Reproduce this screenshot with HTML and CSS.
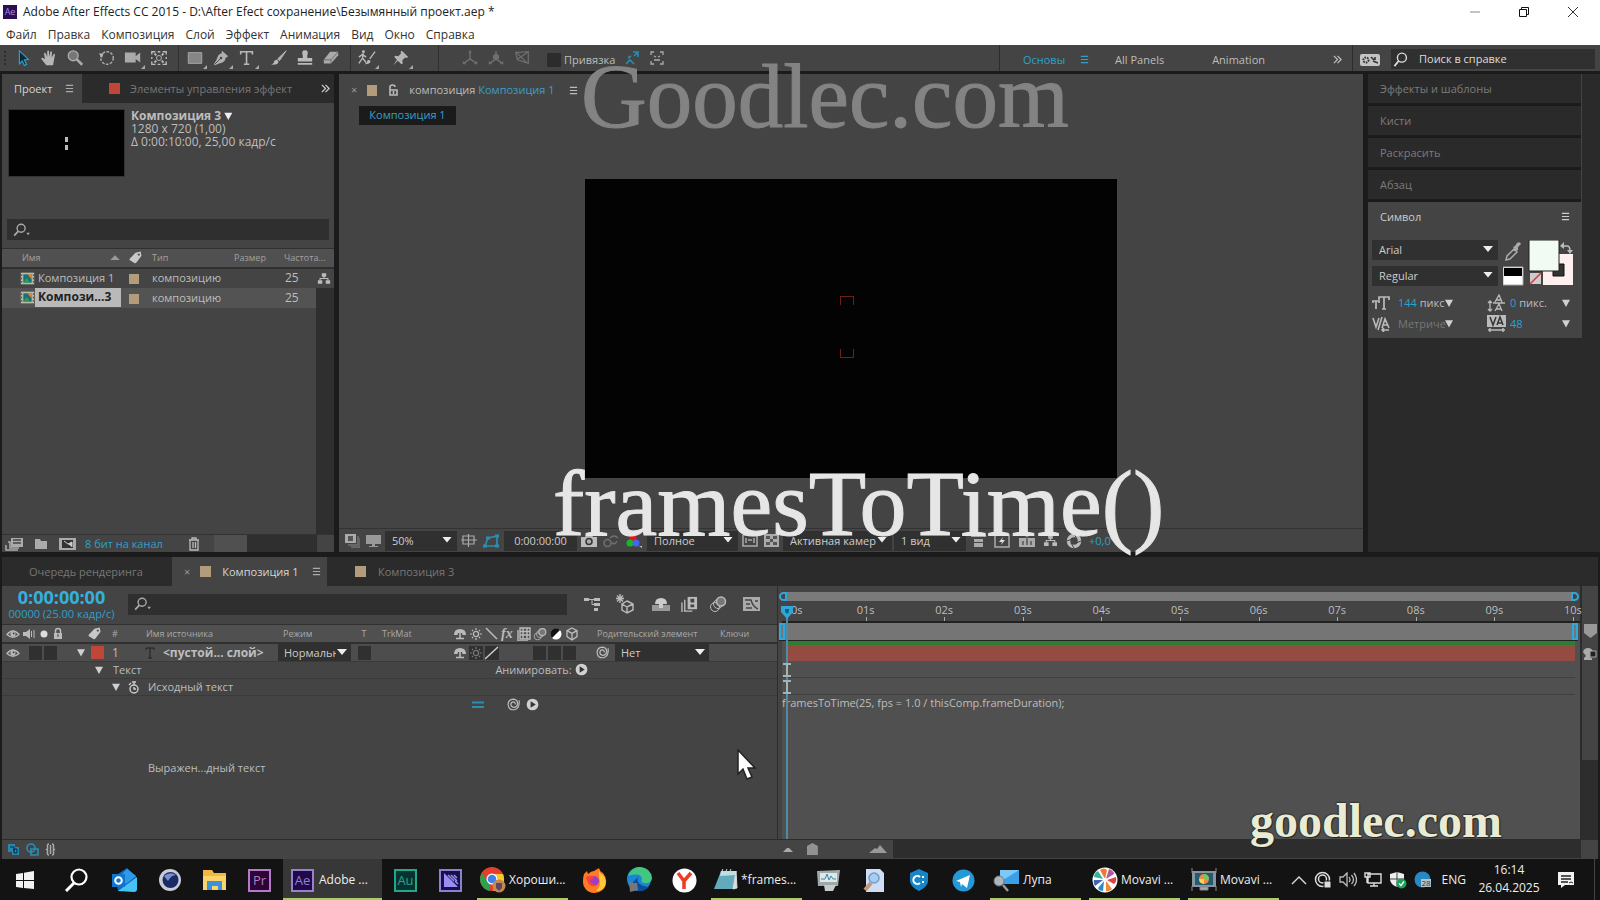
FILE: index.html
```html
<!DOCTYPE html>
<html lang="ru">
<head>
<meta charset="utf-8">
<title>Adobe After Effects CC 2015</title>
<link rel="stylesheet" href="styles.css">
</head>
<body>
<svg class="defs" aria-hidden="true">
  <defs>
    <symbol id="menu" viewBox="0 0 10 10"><path d="M1 1.5h8M1 5h8M1 8.5h8" stroke="currentColor" stroke-width="1.2"/></symbol>
    <symbol id="more" viewBox="0 0 10 10"><path d="M1 1l4 4-4 4M5 1l4 4-4 4" stroke="currentColor" stroke-width="1.4" fill="none"/></symbol>
    <symbol id="find" viewBox="0 0 20 16"><circle cx="9" cy="6" r="4.6" fill="none" stroke="currentColor" stroke-width="1.6"/><path d="M5.6 9.5L1 14.5" stroke="currentColor" stroke-width="2"/><path d="M15 11h4l-2 3z" fill="currentColor"/></symbol>
    <symbol id="glass" viewBox="0 0 16 16"><circle cx="9.5" cy="6" r="4.8" fill="none" stroke="currentColor" stroke-width="1.5"/><path d="M6 9.6L1.5 15" stroke="currentColor" stroke-width="2"/></symbol>
    <symbol id="tag" viewBox="0 0 14 14"><path fill-rule="evenodd" fill="currentColor" d="M1 8L7 2l5.500-1.500L13.500 5 8 12.500q-1.500 1.500-3 0L1 10q-1-1 0-2zM10.500 2.600a1.200 1.200 0 1 0 .1 0z"/></symbol>
    <symbol id="eye" viewBox="0 0 14 10"><path d="M1 5.500Q7-1.500 13 5.500Q7 11 1 5.500z" fill="none" stroke="currentColor" stroke-width="1.300"/><circle cx="7" cy="5" r="2.600" fill="currentColor"/><circle cx="7.600" cy="4.400" r=".9" fill="#333"/></symbol>
    <symbol id="shy" viewBox="0 0 14 14"><path d="M1 8Q1 2 7 2t6 6H9.500L9 6H5L4.500 8z" fill="currentColor"/><path d="M7 6v6M3 11.500h8" stroke="currentColor" stroke-width="1.600"/></symbol>
    <symbol id="sun" viewBox="0 0 14 14"><circle cx="7" cy="7" r="2.600" fill="none" stroke="currentColor" stroke-width="1.300"/><path d="M7 1v2M7 11v2M1 7h2M11 7h2M3 3l1 1M10 10l1 1M11 3l-1 1M3 11l1-1" stroke="currentColor" stroke-width="1.200"/></symbol>
    <symbol id="cube" viewBox="0 0 14 14"><path d="M7 1l5 2.600v6L7 13 2 9.600v-6zM2 3.600l5 2.800 5-2.800M7 6.400V13" fill="none" stroke="currentColor" stroke-width="1.300"/></symbol>
    <symbol id="orbs" viewBox="0 0 18 18"><circle cx="6" cy="12" r="4.500" fill="none" stroke="currentColor"/><circle cx="9" cy="9" r="4.500" fill="none" stroke="currentColor"/><circle cx="12" cy="6.500" r="4.500" fill="#777" stroke="currentColor" stroke-width="1.500"/></symbol>
    <symbol id="film" viewBox="0 0 18 18"><path d="M7 1h10v13H7z" fill="currentColor"/><path d="M10 3h4v4h-4zM10 9h4v3h-4z" fill="#444"/><path d="M4 4v12M1 7v10M3 16h9" stroke="currentColor" stroke-width="1.500"/></symbol>
    <symbol id="grid" viewBox="0 0 14 14"><path d="M3 1h10v11H3zM3 4.500h10M3 8h10M6 1v11M10 1v11M1 3v11h10" fill="none" stroke="currentColor" stroke-width="1.400"/></symbol>
    <symbol id="swirl" viewBox="0 0 14 14"><path d="M13 2.500Q14 11 8.500 12.500 2 13.500 1.200 7.500 1 1.500 7 1.300q4.500.4 4.400 5Q10.800 10 7.300 10 4 9.600 4.200 6.600 4.600 4 7.200 4.200q2 .4 1.500 2.600" fill="none" stroke="currentColor" stroke-width="1.300"/></symbol>
    <symbol id="play" viewBox="0 0 14 14"><circle cx="7" cy="7" r="6.300" fill="#d0d0d0"/><path d="M5 3.500L10.500 7 5 10.500z" fill="#333"/></symbol>
    <symbol id="flow" viewBox="0 0 16 14"><path d="M5.500 1h5v4h-5zM1 9h5v4H1zM10 9h5v4h-5z" fill="currentColor"/><path d="M8 4v3M3.500 9V7h9v2" fill="none" stroke="currentColor" stroke-width="1.300"/></symbol>
    <symbol id="comp" viewBox="0 0 18 14"><path d="M1 0h16v14H1z" fill="#b9b9ad"/><path d="M4 2h10v10H4z" fill="#187078"/><path d="M9 2h5v6z" fill="#e88a28"/><path d="M4 12l4-6 4 6z" fill="#3a9b45"/><path d="M2 2v11M16 2v11" stroke="#333" stroke-dasharray="2 2"/></symbol>
    <symbol id="beam" viewBox="0 0 8 14"><path d="M0 1h8M0 13h8M4 1v12" fill="none" stroke="#a3b4b8" stroke-width="2"/></symbol>
  </defs>
</svg>

<header class="titlebar">
  <span class="logo">Ae</span>
  <span class="title">Adobe After Effects CC 2015 - D:\After Efect сохранение\Безымянный проект.aep *</span>
  <button class="win" aria-label="Свернуть"><svg width="12" height="12"><path d="M1 6h10" stroke="#888"/></svg></button>
  <button class="win" aria-label="Восстановить"><svg width="12" height="12" fill="none" stroke="#111"><path d="M1.500 3.500h7v7h-7zM3.500 3V1.500h7v7H9"/></svg></button>
  <button class="win" aria-label="Закрыть"><svg width="12" height="12"><path d="M1 1l10 10M11 1L1 11" stroke="#333"/></svg></button>
</header>
<nav class="menubar">
  <button>Файл</button><button>Правка</button><button>Композиция</button><button>Слой</button><button>Эффект</button><button>Анимация</button><button>Вид</button><button>Окно</button><button>Справка</button>
</nav>

<div class="toolbar">
  <span class="grip"></span>
  <div class="tools">
    <button aria-label="Выделение"><svg viewBox="0 0 20 20"><path d="M6 2l10 9.500-4.500.6 2.500 5-2.500 1.200-2.300-5L6 16.500z" fill="#0d2733" stroke="#2a9fc9" stroke-width="1.300"/></svg></button>
    <button aria-label="Рука"><svg viewBox="0 0 20 20"><path d="M7 18l-5.500-7q0-2 2-1l2 1.500L4.500 5q.8-1.500 2 0L8 9V2.500q1-1.500 2 0V9l1.500-6q1.200-1 1.800.3L13 9.500l2.200-4q1.500-.6 1.400 1L14.500 18z" fill="#b5b5b5"/></svg></button>
    <button aria-label="Масштаб"><svg viewBox="0 0 20 20"><circle cx="8" cy="7.500" r="5.500" fill="#777" stroke="#aaa" stroke-width="1.500"/><path d="M12 11.500l6 6" stroke="#aaa" stroke-width="3"/></svg></button>
  </div>
  <div class="tools">
    <button aria-label="Поворот"><svg viewBox="0 0 20 20"><circle cx="10" cy="10" r="7" fill="none" stroke="#aaa" stroke-width="1.600" stroke-dasharray="3 1.500"/><path d="M1 5l5 0-1.500 5z" fill="#bbb"/></svg></button>
    <button class="sub" aria-label="Камера"><svg viewBox="0 0 20 20"><path d="M1 4h12v11H1zM13 8l5-4v11l-5-4z" fill="#aaa"/></svg></button>
    <button aria-label="Центр"><svg viewBox="0 0 20 20"><path d="M2 6V3h4M14 3h4v3M18 14v3h-4M6 17H2v-3M8.500 3h3M8.500 17h3M2 9v2M18 9v2" fill="none" stroke="#bbb" stroke-width="1.500"/><circle cx="10" cy="10" r="2.800" fill="none" stroke="#bbb"/><path d="M5 5l2 2M15 5l-2 2M5 15l2-2M15 15l-2-2" stroke="#bbb" stroke-width="2"/></svg></button>
  </div>
  <i class="rule"></i>
  <div class="tools">
    <button class="sub" aria-label="Прямоугольник"><svg viewBox="0 0 20 20"><path d="M2.500 4h15v12h-15z" fill="#868686" stroke="#aaa"/></svg></button>
    <button class="sub" aria-label="Перо"><svg viewBox="0 0 20 20"><path d="M11 2l7 6-3 2q0 5-7 6l-5 2-1-1 3-5Q7 5 10.500 5z" fill="#b0b0b0"/><path d="M3 17l6-6" stroke="#444"/><circle cx="10" cy="10" r="1.400" fill="#444"/></svg></button>
    <button class="sub" aria-label="Текст"><svg viewBox="0 0 20 20"><path d="M3 6V3h13v3M9.500 3v14M6.500 17h6" fill="none" stroke="#b8b8b8" stroke-width="1.800"/></svg></button>
  </div>
  <div class="tools">
    <button aria-label="Кисть"><svg viewBox="0 0 20 20"><path d="M18 2L8.500 11l2 2z" fill="#aaa" stroke="#bbb"/><path d="M1 17q3 0 4-4 2-2 4 0 1 3-2 4-3 1-6 0z" fill="#bbb"/></svg></button>
    <button aria-label="Штамп"><svg viewBox="0 0 20 20"><path d="M7.500 10V7.500Q5.500 1.500 10 1.500t2.500 6V10H18v4H2v-4zM2 15.500h16v2H2z" fill="#bbb"/></svg></button>
    <button aria-label="Ластик"><svg viewBox="0 0 20 20"><path d="M9 3h9v4l-8 9H2v-4z" fill="#aaa"/><path d="M2 12h8l8-9M10 12v4" fill="none" stroke="#666"/></svg></button>
  </div>
  <i class="rule"></i>
  <div class="tools tight">
    <button class="sub" aria-label="Ротокисть"><svg viewBox="0 0 20 20"><circle cx="6" cy="3" r="1.600" fill="#bbb"/><path d="M6 5l-1 5-4 6M5 10l4 5M1 9l4-3 4 3M19 3l-6 8" fill="none" stroke="#bbb" stroke-width="1.500"/><path d="M7 17q3-1 4-5l3 1q0 4-7 4z" fill="#bbb"/></svg></button>
  </div>
  <div class="tools">
    <button class="sub" aria-label="Марионетка"><svg viewBox="0 0 20 20"><path d="M11 2l7 7-2 1-1.500-.6-3 3 .5 3.600-1.500 1-4-4-5 5 4-6-3-3 1-1.500 3.500.5 3-3L9.500 3z" fill="#b5b5b5"/></svg></button>
  </div>
  <i class="rule wide"></i>
  <div class="tools dim axes">
    <button aria-label="Локальные оси"><svg viewBox="0 0 20 20"><path d="M10 2v9l-7 5M10 11l7 5" fill="none" stroke="currentColor" stroke-width="1.600"/><path d="M8 4l2-3 2 3zM2 13l0 4 4 0zM18 13v4h-4z" fill="currentColor"/></svg></button>
    <button aria-label="Мировые оси"><svg viewBox="0 0 20 20"><circle cx="10" cy="9" r="3.500" fill="currentColor"/><path d="M10 2v9l-7 5M10 11l7 5" fill="none" stroke="currentColor" stroke-width="1.600"/><path d="M2 13l0 4 4 0zM18 13v4h-4z" fill="currentColor"/></svg></button>
    <button aria-label="Оси вида"><svg viewBox="0 0 20 20"><path d="M3 4l14-1v13L5 12zM3 3l13 13M4 12L17 3" fill="none" stroke="currentColor" stroke-width="1.400"/></svg></button>
  </div>
  <label class="snap"><input type="checkbox">Привязка</label>
  <button class="icon" aria-label="Края"><svg width="14" height="14" fill="none" stroke="#278fb4" stroke-width="1.600"><path d="M1 13l4-4 4 4M3 7l3-2M9 5l3-3M8 1h5v5"/></svg></button>
  <button class="icon" aria-label="Рамка"><svg width="14" height="14" fill="none" stroke="#aaa" stroke-width="1.300"><path d="M1 4V1h3M10 1h3v3M13 10v3h-3M4 13H1v-3M4 5l2 1M10 5L8 6M4 9h6"/></svg></button>
  <div class="spaces">
    <button class="on">Основы</button><button class="on" aria-label="Меню"><svg class="s10"><use href="#menu"/></svg></button><button>All Panels</button><button>Animation</button><button aria-label="Ещё"><svg class="s10"><use href="#more"/></svg></button>
  </div>
  <svg class="sync" width="20" height="12"><rect width="20" height="12" rx="2" fill="#c4c4c4"/><circle cx="6" cy="6" r="2.600" fill="none" stroke="#333" stroke-width="2" stroke-dasharray="1.600 1"/><path d="M11 3l3 3M13 7l5 2M15 3v3" stroke="#333" stroke-width="1.600"/></svg>
  <label class="help"><svg width="15" height="15"><use href="#glass"/></svg><input type="text" value="Поиск в справке" aria-label="Поиск в справке"></label>
</div>

<main class="work">
  <section class="panel project">
    <div class="tabs"><button class="tab on">Проект<svg class="s10"><use href="#menu"/></svg></button><button class="tab fx"><i class="chip red"></i><span>Элементы управления эффект</span></button><button class="tab morebtn" aria-label="Ещё"><svg class="s10"><use href="#more"/></svg></button></div>
    <div class="info">
      <div class="thumb"><i></i><i></i></div>
      <div><b>Композиция 3 <i class="tri"></i></b><br>1280 x 720 (1,00)<br>Δ 0:00:10:00, 25,00 кадр/с</div>
    </div>
    <label class="field psearch"><svg width="20" height="14"><use href="#find"/></svg><input type="text" aria-label="Поиск в проекте"></label>
    <table class="items">
      <colgroup><col class="k1"><col class="k2"><col class="k3"><col class="k4"><col class="k5"><col class="k6"></colgroup>
      <thead><tr><th class="c1"><span>Имя<i class="up"></i></span></th><th class="c2"><svg width="13" height="13"><use href="#tag"/></svg></th><th>Тип</th><th>Размер</th><th colspan="2">Частота...</th></tr></thead>
      <tbody>
        <tr><td class="c1"><svg width="15" height="13"><use href="#comp"/></svg><span>Композиция 1</span></td><td class="c2"><i class="chip"></i></td><td>композицию</td><td></td><td class="c5">25</td><td class="c6"><svg width="14" height="13"><use href="#flow"/></svg></td></tr>
        <tr class="sel"><td class="c1"><svg width="15" height="13"><use href="#comp"/></svg><span>Компози...3</span></td><td class="c2"><i class="chip"></i></td><td>композицию</td><td></td><td class="c5">25</td><td class="c6"></td></tr>
      </tbody>
    </table>
    <div class="listbody"><i class="scroll"></i></div>
    <div class="pfoot">
      <svg width="19" height="14"><path d="M6 1h12v9H6z" fill="#aaa"/><path d="M8 3h8M8 6h8" stroke="#444" stroke-width="1.500"/><path d="M3 5h2v6h9M1 8v5h12" fill="none" stroke="#aaa" stroke-width="1.500"/></svg>
      <svg width="14" height="14"><path d="M1 2h5l1 2h6v8H1z" fill="#aaa"/></svg>
      <svg width="19" height="14"><path d="M1 1h17v12H1z" fill="#aaa"/><path d="M4 3h11v8H4z" fill="#333"/><path d="M6 4l4 3 4-2v5" stroke="#ccc" fill="#ccc"/></svg>
      <button>8 бит на канал</button>
      <svg width="12" height="14" fill="none" stroke="#bbb" stroke-width="1.300"><path d="M1 3h10M4 3V1h4v2M2 3v10h8V3M5 5v6M7.500 5v6"/></svg>
      <i class="hbar"></i>
    </div>
  </section>

  <section class="panel viewer">
    <div class="vhead"><span class="x">×</span><i class="chip"></i><svg width="11" height="12" fill="none" stroke="#bbb" stroke-width="1.600"><path d="M2 6V3q0-2 2.500-2T7 3M2 6h7v5H2zM5.500 7v3"/></svg><span>композиция <a href="#c1">Композиция 1</a></span><svg class="s10"><use href="#menu"/></svg></div>
    <a class="crumb" href="#c1">Композиция 1</a>
    <div class="stage"><div class="canvas"><i class="mark top"></i><i class="mark bottom"></i></div></div>
    <div class="vfoot">
      <svg width="16" height="15"><path d="M1 1h11v9H1z" fill="#aaa"/><path d="M4 3h5v5H4z" fill="#555"/><path d="M14 3v9H4M16 5v9H7" fill="none" stroke="#888"/></svg>
      <svg width="15" height="14"><path d="M0 1h15v9H0zM6 10h3v2h3v1H3v-1h3z" fill="#999"/></svg>
      <span class="pick w72"><select aria-label="Масштаб"><option>50%</option></select></span>
      <svg width="16" height="13" fill="none" stroke="#aaa" stroke-width="1.200"><path d="M2 2h11v8H2zM7.500 0v13M0 6h16"/></svg>
      <svg width="17" height="14" fill="none" stroke="#278fb4" stroke-width="1.700"><path d="M2 12L5 4l9-2v10z"/><path d="M0 12h4M3 4h4M12 2h4M12 12h4" stroke-width="3"/></svg>
      <button class="box tc">0:00:00:00</button>
      <svg width="16" height="13"><path d="M0 3h4l1-2h6l1 2h4v10H0z" fill="#bbb"/><circle cx="8" cy="7.500" r="3" fill="#aaa" stroke="#333" stroke-width="1.500"/></svg>
      <svg width="16" height="14" fill="none" stroke="#707070" stroke-width="1.600"><circle cx="4.500" cy="9" r="3.500"/><path d="M7 4q4-4 8 0M9 9q3 2 5-2"/></svg>
      <svg width="18" height="14"><circle cx="8" cy="4" r="3.500" fill="#e12"/><circle cx="5" cy="9" r="3.500" fill="#1b2"/><circle cx="11" cy="9" r="3.500" fill="#46e"/><path d="M14 12h3v2z" fill="#bbb"/></svg>
      <span class="pick w90"><select aria-label="Разрешение"><option>Полное</option></select></span>
      <svg width="16" height="13" fill="none" stroke="#aaa" stroke-width="1.500"><path d="M1 1h14v11H1zM4 4v5M12 4v5M6 6h4"/></svg>
      <svg width="15" height="13"><path d="M0 0h15v13H0z" fill="#aaa"/><path d="M2 2h4v3H2zM9 2h4v3H9zM6 5h3v3H6zM2 8h4v3H2zM9 8h4v3H9z" fill="#555"/></svg>
      <span class="pick w108"><select aria-label="Камера"><option>Активная камера</option></select></span>
      <span class="pick w72 views"><select aria-label="Виды"><option>1 вид</option></select></span>
      <svg width="15" height="14"><path d="M0 1h15v2H0zM3 5h9v3H3zM3 9h9v4H3z" fill="#aaa"/></svg>
      <svg width="17" height="14"><path d="M1 1h14v12H1z" fill="none" stroke="#aaa" stroke-width="1.500"/><path d="M9 3L5 8h3l-1 3 4-5H8z" fill="#ddd"/></svg>
      <svg width="16" height="14"><path d="M0 4h16v9H0z" fill="#aaa"/><path d="M4 7v4M8 5v6M12 7v4M5 1h6l-3 3z" stroke="#555" stroke-width="1.500" fill="#ccc"/></svg>
      <svg width="15" height="13" class="c-bb"><use href="#flow"/></svg>
      <svg width="16" height="16"><circle cx="8" cy="8" r="5.500" fill="none" stroke="#bbb" stroke-width="3.500"/><path d="M8 1l3 5M15 8l-5 2M8 15l-3-5M1 8l5-2" stroke="#444"/></svg>
      <button class="exp">+0,0</button>
    </div>
  </section>

  <aside class="side">
    <div class="stack">
      <button class="fold">Эффекты и шаблоны</button><button class="fold">Кисти</button><button class="fold">Раскрасить</button><button class="fold">Абзац</button>
      <section class="char">
        <h2>Символ<svg class="s10"><use href="#menu"/></svg></h2>
        <div class="fonts">
          <div class="fcol"><span class="pick"><select aria-label="Шрифт"><option>Arial</option></select></span><span class="pick"><select aria-label="Начертание"><option>Regular</option></select></span></div>
          <svg class="swatches" viewBox="0 0 72 46"><path d="M3 20l1-4 7-7 3 3-7 7z" fill="none" stroke="#aaa" stroke-width="1.500"/><path d="M10 7l2-1 2-3q3-2 4 1l-3 3 0 3-2 1z" fill="#aaa"/><path d="M0 27h20v18H0z" fill="#fff" stroke="#aaa"/><path d="M1 28h18v8H1z" fill="#000"/><path d="M40 14h30v31H40z" fill="#fdf0ee"/><path d="M50 24h11v12H50z" fill="#333" stroke="#111"/><path d="M26 0h30v31H26z" fill="#f2faf4" stroke="#222"/><path d="M27 33h11v11H27z" fill="#ccc"/><path d="M27 44l11-11" stroke="#d33" stroke-width="1.500"/><path d="M59 6h5q3 0 3 5" fill="none" stroke="#bbb" stroke-width="1.500"/><path d="M61 2v7l-4-3zM64 10h6l-3 4z" fill="#bbb"/></svg>
        </div>
        <div class="nums">
          <svg width="18" height="16" fill="none" stroke="#bbb" stroke-width="1.700"><path d="M7 5V2h10v3M12 2v12M10 14h4M1 8V6h6v2M4 6v8"/></svg><span><b>144</b> пикс</span><i class="tri"></i>
          <svg width="19" height="18" fill="none" stroke="#bbb" stroke-width="1.300"><path d="M8 8l4-7 3 7M9 6h5M8 17l4-7 3 7M9 15h5M6 9h12M3 7v10M1 9l2-2 2 2M1 15l2 2 2-2"/></svg><span><b>0</b> пикс.</span><i class="tri"></i>
          <svg width="19" height="16" fill="none" stroke="#bbb" stroke-width="1.600"><path d="M1 2l3 9 3-9M10 12l3-9 4 9M11 9h5M10 1L6 14M10 14h7M12 12l-2 2 2 2"/></svg><span class="dimtxt">Метриче</span><i class="tri"></i>
          <svg width="19" height="17"><path d="M0 0h19v12H0z" fill="#bbb"/><path d="M3 2l3 8 3-8M10 10l3-8 3 8M11 8h4" fill="none" stroke="#333" stroke-width="1.500"/><path d="M1 15h17M3 13v4M16 13v4" stroke="#bbb" stroke-width="1.500"/></svg><span><b>48</b></span><i class="tri"></i>
        </div>
      </section>
    </div>
  </aside>
  <div class="caption head">Goodlec.com</div>
</main>

<section class="timeline">
  <div class="tabs">
    <button class="tab queue">Очередь рендеринга</button><button class="tab on cur"><span class="x">×</span><i class="chip"></i>Композиция 1<svg class="s10"><use href="#menu"/></svg></button><button class="tab third"><i class="chip"></i>Композиция 3</button>
  </div>
  <div class="tl">
    <div class="left">
      <div class="thead">
        <div class="clock"><b>0:00:00:00</b><span>00000 (25.00 кадр/с)</span></div>
        <label class="field"><svg width="20" height="14"><use href="#find"/></svg><input type="text" aria-label="Поиск слоя"></label>
        <svg width="18" height="18" fill="#bbb"><path d="M0 3h5v3H0zM10 3h6v3h-6zM10 8h6v3h-6zM10 13h4v3h-4z"/><path d="M5 4.500h5M8 4v5.500h2" stroke="#bbb" fill="none"/></svg>
        <svg width="20" height="20" stroke="#bbb" fill="none" stroke-width="1.400"><path d="M5 0v9M1 4.500h8M2 1.500l6 6M8 1.500l-6 6M12 7l6 3v6l-6 3-5-3v-6zM7 10l5 3 6-3M12 13v6"/></svg>
        <svg width="18" height="16"><path d="M0 9h18v6H0z" fill="#999"/><path d="M3 8q0-6 6-6t6 6zM7 7h4v5H7z" fill="#ccc"/></svg>
        <svg class="c-bb" width="17" height="17"><use href="#film"/></svg>
        <svg class="c-bb" width="18" height="18"><use href="#orbs"/></svg>
        <svg width="17" height="16"><path d="M0 1h17v14H0z" fill="#aaa"/><path d="M2 4h6q2 7 7 9M3 8h4M3 12h6M12 5h3" stroke="#444" stroke-width="1.400" fill="none"/></svg>
      </div>
      <div class="cols hdr">
        <span class="av"><svg width="14" height="10"><use href="#eye"/></svg><svg width="14" height="12"><path d="M1 4h3l4-3v10L4 8H1z" fill="#bbb"/><path d="M9.500 3v6M12 2v8" stroke="#bbb"/></svg><svg width="12" height="12"><circle cx="6" cy="6" r="3.500" fill="#ddd"/></svg><svg width="12" height="13"><path d="M3.500 6V4q0-2.500 2.500-2.500T8.500 4v2" fill="none" stroke="#bbb" stroke-width="1.500"/><path d="M2 6h8v6H2z" fill="#bbb"/><path d="M6 7v3" stroke="#444"/></svg></span>
        <span class="ctr tagcol"><svg width="13" height="13"><use href="#tag"/></svg></span>
        <span class="num">#</span><span>Имя источника</span><span>Режим</span><span class="ctr">T</span><span>TrkMat</span>
        <span class="sw"><svg><use href="#shy"/></svg><svg><use href="#sun"/></svg><svg><path d="M1 1l11 11" stroke="#bbb" stroke-width="1.500"/></svg><em>fx</em><svg><use href="#grid"/></svg><svg><use href="#orbs"/></svg><svg><circle cx="7" cy="7" r="5.500" fill="#fff"/><path d="M3 11A5.500 5.500 0 0 1 11 3z" fill="#111"/></svg><svg><use href="#cube"/></svg></span>
        <span>Родительский элемент</span><span>Ключи</span>
      </div>
      <div class="cols layer">
        <span class="av"><svg width="14" height="10"><use href="#eye"/></svg><i></i><i class="sq"></i><i class="sq"></i></span>
        <span class="lab"><i class="tri"></i><i class="chip red"></i></span>
        <span class="num">1</span><span class="name"><svg width="10" height="12"><path d="M1 3V1h8v2M5 1v10M3 11h4" stroke="#222" fill="none"/></svg><b>&lt;пустой... слой&gt;</b></span>
        <span class="pick"><select aria-label="Режим"><option>Нормальный</option></select></span><span class="ctr"><i class="sq"></i></span><span></span>
        <span class="sw"><svg><use href="#shy"/></svg><svg class="dk dimtxt"><use href="#sun"/></svg><svg class="dk"><path d="M0 13L13 1" stroke="#ccc" stroke-width="1.500"/></svg><em></em><em></em><i class="sq"></i><i class="sq"></i><i class="sq"></i></span>
        <span class="parent"><svg width="13" height="13"><use href="#swirl"/></svg><span class="pick"><select aria-label="Родительский элемент"><option>Нет</option></select></span></span><span></span>
      </div>
      <div class="prop p1"><i class="tri"></i><span>Текст</span><span class="anim">Анимировать:<svg width="13" height="13"><use href="#play"/></svg></span></div>
      <div class="prop p2"><i class="tri"></i><svg width="12" height="13" fill="none" stroke="#ccc" stroke-width="1.400"><circle cx="6" cy="8" r="4"/><path d="M6 6v2h2M4 1h4M6 1v3M1 4l2-2"/></svg><span>Исходный текст</span></div>
      <div class="prop p3"><svg width="12" height="10" stroke="#278fb4" stroke-width="2"><path d="M0 2.500h12M0 7h12"/></svg><svg width="13" height="13"><use href="#swirl"/></svg><svg width="13" height="13"><use href="#play"/></svg></div>
      <div class="exprname">Выражен...дный текст</div>
    </div>
    <div class="graph">
      <div class="navi"><i></i><i></i></div>
      <div class="ruler"><span>0s</span><span>01s</span><span>02s</span><span>03s</span><span>04s</span><span>05s</span><span>06s</span><span>07s</span><span>08s</span><span>09s</span><span>10s</span></div>
      <div class="area"><i></i><i></i></div>
      <div class="cache"></div>
      <div class="bar"></div>
      <div class="track"><svg width="8" height="14"><use href="#beam"/></svg></div><div class="track"><svg width="8" height="14"><use href="#beam"/></svg></div>
      <div class="expr">framesToTime(25, fps = 1.0 / thisComp.frameDuration);</div>
      <svg class="playhead" viewBox="0 0 12 13" width="12" height="13"><path d="M0 0h12v6l-6 7-6-7z" fill="#2ea8dc"/><path d="M4 3h4v3l-2 2-2-2z" fill="#14607f"/></svg><i class="needle"></i>
    </div>
    <div class="gutter"><svg width="13" height="16"><path d="M0 1h13v9l-6.500 5L0 10z" fill="#999"/></svg><svg width="14" height="14"><path d="M0 5q1-4 5-4t5 4l-3 3v3h2v2H1v-2l2-2z" fill="#aaa"/><path d="M7 4h6v6H7z" fill="#222" stroke="#aaa"/></svg><i></i></div>
  </div>
  <div class="tfoot">
    <svg width="13" height="13"><path d="M1 1h7v3h4v8H5V9H1z" fill="#2688ad"/><path d="M3 4h4v4M7 6h3v4H7z" stroke="#124" fill="none"/></svg>
    <svg width="13" height="13" fill="none" stroke="#278fb4" stroke-width="1.600"><circle cx="5" cy="5" r="4"/><path d="M5 6h7v6H5z"/></svg>
    <svg width="11" height="13" fill="none" stroke="#aaa" stroke-width="1.500"><path d="M4 1Q2 1 2.500 4T1 6.500Q3 6 2.500 9T4 12M7 1q2 0 1.500 3T10 6.500Q8 6 8.500 9T7 12M5.500 2v9"/></svg>
    <span class="zoom"><svg width="10" height="5"><path d="M0 5l4-4h2l4 4z" fill="#aaa"/></svg><input type="range" value="12" aria-label="Масштаб времени"><svg width="18" height="8"><path d="M0 8l6-5 2 1 3-4 7 8z" fill="#999"/></svg></span>
    <i class="hscroll"></i>
  </div>
</section>

<footer class="taskbar">
  <button class="t start" aria-label="Пуск"><svg width="18" height="18"><path d="M0 3l7-1v7H0zM8 1.800L18 0v9H8zM0 10h7v7l-7-1zM8 10h10v8L8 17z" fill="#f2f2f2"/></svg></button>
  <button class="t find" aria-label="Поиск"><svg width="24" height="24"><circle cx="15" cy="9" r="7.500" fill="none" stroke="#fff" stroke-width="2.200"/><path d="M10 15l-8 8" stroke="#fff" stroke-width="3"/></svg></button>
  <button class="t" aria-label="Outlook"><svg width="26" height="24"><path d="M3 8L15 0l9 8v15H6z" fill="#1466b8"/><path d="M6 10l9-9 9 7-10 8z" fill="#2c9be8"/><path d="M6 23l19-14v12q0 3-3 3z" fill="#45c3f5"/><path d="M0 6h13v13H0z" fill="#1274cf"/><circle cx="6.500" cy="12.500" r="3.300" fill="none" stroke="#fff" stroke-width="2"/></svg></button>
  <button class="t" aria-label="Cinema 4D"><svg width="24" height="24"><circle cx="12" cy="12" r="11" fill="#c9ccd8"/><circle cx="12.500" cy="12" r="8" fill="#1b2b66"/><path d="M6 8q6-5 12-1-5 0-8 6z" fill="#7b8fce"/></svg></button>
  <button class="t" aria-label="Проводник"><svg width="23" height="22"><path d="M0 1h9l2 3h12v17H0z" fill="#f2b73c"/><path d="M0 7h23v14H0z" fill="#fbd36b"/><path d="M4 12h15v9h-4v-4H9v4H4z" fill="#3a93d8"/></svg></button>
  <button class="t" aria-label="Premiere"><span class="ad pr">Pr</span></button>
  <button class="t run act"><span class="ad ae">Ae</span>Adobe ...</button>
  <button class="t" aria-label="Audition"><span class="ad au">Au</span></button>
  <button class="t" aria-label="Media Encoder"><span class="ad me"><svg width="16" height="16"><path d="M1 1v14h14z" fill="#9a8cf0"/><path d="M5 3l3 3M8 3l3 3M11 3l3 3M8 6l3 3M11 6l3 3M12 9l3 3" stroke="#9a8cf0" stroke-width="1.500"/></svg></span></button>
  <button class="t run"><svg width="26" height="26"><circle cx="12" cy="12" r="12" fill="#e33e2e"/><path d="M2 6l8 12-1 6A12 12 0 0 1 2 6z" fill="#2ba24c"/><path d="M12 7h11a12 12 0 0 1-10 17l4-9z" fill="#f7c631"/><circle cx="12" cy="12" r="5.500" fill="#fff"/><circle cx="12" cy="12" r="4.300" fill="#3f82ec"/><circle cx="19" cy="19" r="6.500" fill="#c38b4d"/><path d="M16 16h6v5l-3 3-3-3z" fill="#5d4668"/></svg>Хороши...</button>
  <button class="t" aria-label="Firefox"><svg width="25" height="25"><path d="M2 6l3-3 1 3q3-3 6-3l5-3q1 4 4 5 4 5 3 10a11 10 0 0 1-23-1q0-5 1-8z" fill="#ff7a22"/><path d="M17 1q0 4 4 6 4 5 2 11-3 5-9 5 6-5 3-14z" fill="#ffc938"/><circle cx="12" cy="13" r="5" fill="#a33cc4"/><path d="M4 9q6-3 8 1l-4 2q1 5 6 4-7 6-10-7z" fill="#f8423c"/></svg></button>
  <button class="t" aria-label="Edge"><svg width="27" height="26"><circle cx="13" cy="12" r="12" fill="#1c86d6"/><path d="M2 9Q6 0 14 0q11 1 12 11 0 6-8 5-4-1-2-4-1-7-14-3z" fill="#43c780"/><path d="M12 10q-3 8 11 10-5 5-11 4-5-4-5-9z" fill="#0d4c9c"/><path d="M3 14l4 2h4l1 7-8 2z" fill="#777"/></svg></button>
  <button class="t" aria-label="Яндекс"><svg width="25" height="25"><circle cx="12.500" cy="12.500" r="12" fill="#fff"/><path d="M6 5l6 8v8M19 5l-7 8" fill="none" stroke="#ed3c24" stroke-width="3.500"/></svg></button>
  <button class="t run"><svg width="24" height="22"><path d="M7 2h15l-3 18H0z" fill="#63aabd"/><path d="M7 2h15l-1 4-15 1z" fill="#bfdfe5"/><path d="M22 2l1 17-4 1zM8 2l1-2M12 2l1-2M16 2l1-2" fill="#ddd" stroke="#ddd"/></svg>*frames...</button>
  <button class="t" aria-label="Монитор"><svg width="25" height="24"><path d="M1 3l23-1-2 16H2z" fill="#9eaaa9"/><path d="M4 5h17v9H4z" fill="#dce9e8"/><path d="M5 11h4l2-5 2 6 2-4 2 3h3" fill="none" stroke="#3c88a2"/><path d="M8 17h12l-3 6H9z" fill="#c8cdcb"/></svg></button>
  <button class="t" aria-label="Документ"><svg width="22" height="25"><path d="M3 1h14l4 4v19H3z" fill="#cfddf5"/><circle cx="11" cy="10" r="5" fill="#a9cdf1" stroke="#6f9ec9" stroke-width="1.500"/><path d="M8 15l-6 7" stroke="#c39977" stroke-width="4"/></svg></button>
  <button class="t" aria-label="Защита"><svg width="20" height="24"><path d="M10 1l9 4v9q-2 6-9 9-7-3-9-9V5z" fill="#1686c9"/><path d="M11 9a4 4 0 1 0 0 6M13 9h2M13 14h2" fill="none" stroke="#fff" stroke-width="2"/></svg></button>
  <button class="t" aria-label="Telegram"><svg width="23" height="23"><circle cx="11.500" cy="11.500" r="11" fill="#2599d6"/><path d="M4 12l14-6-3 13-5-4-1 3-1-5z" fill="#fff"/></svg></button>
  <button class="t run"><svg width="27" height="24"><path d="M7 2h19v14H7z" fill="#39a0e8"/><path d="M7 2h19L7 14z" fill="#7cc8f6"/><circle cx="6" cy="13" r="5" fill="#aab7be" stroke="#777"/><path d="M10 17l5 6" stroke="#999" stroke-width="2.500"/></svg>Лупа</button>
  <button class="t run"><svg width="26" height="26"><circle cx="13" cy="13" r="12.500" fill="#fff"/><path d="M13 12L8 3q4-3 7 0z" fill="#ef792e"/><path d="M14 12l3-10q5 2 5 5z" fill="#b4569e"/><path d="M15 13l9-3q1 5-2 7z" fill="#d44"/><path d="M14 14l6 8q-3 3-6 2z" fill="#f08a30"/><path d="M12 14l-1 10q-4 0-5-3z" fill="#288cc7"/><path d="M11 13l-8 6q-2-4-1-6z" fill="#4265b4"/><path d="M11 12L2 10q0-4 4-6z" fill="#3ab0a0"/><circle cx="13" cy="13" r="2" fill="#fff"/></svg>Movavi ...</button>
  <button class="t run"><svg width="26" height="24"><path d="M1 3h24v16H1z" fill="#8795a0"/><path d="M4 5h18v12H4z" fill="#245b70"/><circle cx="13" cy="11" r="5" fill="#ed8d43"/><path d="M13 6a5 5 0 0 1 5 5h-5z" fill="#75c85d"/><path d="M8 11a5 5 0 0 0 5 5v-5z" fill="#f4d65f"/><path d="M9 19h8v3H9zM1 0v5M25 0v5M1 18v5M25 18v5" fill="#aaa" stroke="#888"/></svg>Movavi ...</button>
  <div class="tray">
    <svg width="16" height="10"><path d="M1 9l7-7 7 7" fill="none" stroke="#ddd" stroke-width="1.400"/></svg>
    <svg width="18" height="18"><circle cx="8.500" cy="8.500" r="7" fill="none" stroke="#ddd" stroke-width="1.500"/><circle cx="8.500" cy="8" r="4" fill="none" stroke="#ddd" stroke-width="1.500"/><path d="M8.500 5v6M10 10h7v7h-7z" stroke="#111" fill="#ddd"/></svg>
    <svg width="18" height="16" fill="none" stroke="#bbb" stroke-width="1.300"><path d="M1 5h3l4-4v13l-4-4H1zM10 5q2 3 0 5M12.500 3q4 5 0 9M15 1q5 7 0 13"/></svg>
    <svg width="18" height="16" fill="none" stroke="#ddd" stroke-width="1.400"><path d="M4 2h13v9H4zM10 11v3M6 14h8M1 1h5v4H1zM3 5v6"/></svg>
    <svg width="18" height="18"><path d="M8 1l7 2v6q-1 5-7 7-6-2-7-7V3z" fill="#eee"/><path d="M8 1v15M1 8h14" stroke="#444"/><circle cx="12.500" cy="12.500" r="5" fill="#1ca35a"/><path d="M10 12.500l2 2 3-4" fill="none" stroke="#fff" stroke-width="1.300"/></svg>
    <svg width="18" height="18"><circle cx="8.500" cy="8.500" r="8" fill="#2788c4"/><path d="M7 8h10v8H7z" fill="#b5c3cc"/><text x="12" y="15" font-size="8" text-anchor="middle" fill="#333">28</text></svg>
    <span>ENG</span>
  </div>
  <div class="date">16:14<br>26.04.2025</div>
  <svg class="note" width="18" height="18"><path d="M1 1h16v13H8l-4 3v-3H1z" fill="#f2f2f2"/><path d="M4 5h10M4 8h10M4 11h7" stroke="#222" stroke-width="1.300"/><path d="M12 12q2-2 4 0M13 15q2-1 3 1" stroke="#222" fill="none"/></svg>
  <i class="edge"></i>
</footer>
<div class="caption func">framesToTime()</div>
<div class="brand">goodlec.com</div>
<svg class="pointer" width="20" height="31" viewBox="0 0 20 31"><path d="M1 1v24l5-5 4 10 5-2-4-9h7z" fill="#fff" stroke="#222" stroke-width="1.500"/></svg>
</body>
</html>
```
FILE: styles.css
```css
* { box-sizing: border-box; }
body {
  margin: 0; min-height: 100vh; display: flex; flex-direction: column; position: relative;
  background: #1b1b1b; color: #bdbdbd; font: 11px/14px "Open Sans", "Noto Sans", sans-serif; overflow: hidden;
}
.defs { position: absolute; width: 0; height: 0; }
svg { flex: none; display: block; }
i { font-style: normal; flex: none; }
button, input, select { font: inherit; color: inherit; background: none; border: 0; padding: 0; margin: 0; outline: 0; white-space: nowrap; }
a { color: #3a9fc4; text-decoration: none; }
.s10 { width: 9px; height: 9px; }
.c-bb { color: #bbb; }
.dimtxt { color: #777; }
.tri { display: inline-block; width: 8px; height: 8px; background: #d0d0d0; clip-path: polygon(0 10%, 100% 10%, 50% 100%); }
.chip { display: inline-block; width: 11px; height: 11px; background: #b39c7b; }
.chip.red { background: #c04638; }

.titlebar { display: flex; height: 24px; background: #fff; color: #222; align-items: center; padding: 0 3px; font-size: 12px; }
.logo { width: 14px; height: 14px; background: #2a0f55; color: #a98be0; font-size: 9px; text-align: center; }
.title { margin-left: 6px; flex: 1; }
.win { width: 49px; height: 24px; display: grid; place-items: center; }
.menubar { display: flex; gap: 11px; height: 21px; background: #fff; color: #333; padding: 0 0 0 6px; align-items: center; font-size: 12px; }

.toolbar { display: flex; align-items: center; height: 29px; background: #444; border-bottom: 3px solid #1b1b1b; white-space: nowrap; }
.grip { width: 2px; height: 14px; margin: 0 4px; border-left: 2px dotted #2d2d2d; }
.tools { display: flex; margin-right: 6px; }
.tools button { width: 26px; height: 24px; display: grid; place-items: center; position: relative; }
.tools.tight { margin-right: 8px; }
.tools.dim { color: #6e6e6e; }
.tools svg { width: 18px; height: 18px; }
.sub::after { content: ""; position: absolute; right: 1px; bottom: 1px; border: 2px solid transparent; border-right-color: #aaa; border-bottom-color: #aaa; }
.rule { width: 1px; height: 26px; background: #303030; margin-right: 3px; }
.rule.wide { margin-left: 18px; margin-right: 18px; }
.snap { display: flex; align-items: center; gap: 3px; margin: 2px 10px 0 6px; padding-top: 2px; }
.snap input { appearance: none; width: 14px; height: 14px; background: #2c2c2c; }
.icon { margin-right: 11px; }
.spaces { display: flex; align-items: center; margin-left: auto; border-left: 1px solid #2c2c2c; height: 26px; padding: 3px 10px 0 23px; border-right: 1px solid #2c2c2c; }
.spaces .on { color: #2da0cb; }
.spaces button:nth-child(2) { margin: 0 26px 0 15px; }
.spaces button:nth-child(4) { margin: 0 68px 0 48px; }
.sync { margin: 3px 11px 0 7px; }
.help { display: flex; align-items: center; width: 204px; height: 20px; background: #303030; padding-left: 2px; gap: 11px; color: #ddd; margin: 2px 5px 0 0; }
.help input { flex: 1; min-width: 0; }

.work { flex: 1; display: grid; grid-template-columns: 332px 1fr 232px; column-gap: 5px; padding: 0 0 5px 2px; position: relative; min-height: 483px; }
.panel { background: #444; display: flex; flex-direction: column; min-width: 0; }
.tabs { display: flex; background: #2b2b2b; height: 29px; color: #777; }
.tab { display: flex; align-items: center; }
.tab.on { background: #444; color: #d5d5d5; }
.tab.on .s10 { color: #aaa; margin-left: 13px; }
.project .tab.on { width: 80px; padding-left: 12px; }
.fx { margin-left: 27px; gap: 10px; flex: 1; min-width: 0; }
.fx span { overflow: hidden; text-align: left; }
.morebtn { padding-right: 4px; color: #ccc; }
.info { display: flex; gap: 6px; padding: 6px 0 0 6px; height: 116px; font-size: 12px; line-height: 13px; }
.thumb { width: 117px; height: 68px; background: #020202; border: 1px solid #333; display: flex; flex-direction: column; justify-content: center; align-items: center; gap: 3px; }
.thumb i { width: 3px; height: 5px; background: #bbb; }
.info b .tri { background: #eee; }
.field { display: flex; align-items: center; height: 21px; background: #2f2f2f; padding-left: 5px; color: #aaa; }
.field input { flex: 1; min-width: 0; }
.psearch { margin: 0 5px 8px; }
.items { border-collapse: collapse; width: 100%; table-layout: fixed; text-align: left; }
.items th { font-weight: 400; font-size: 9px; height: 19px; background: #505050; border-top: 1px solid #303030; border-bottom: 2px solid #303030; color: #a0a0a0; padding: 0; white-space: nowrap; }
.items td { height: 20px; padding: 0; white-space: nowrap; overflow: hidden; }
.k1 { width: 125px; } .k2 { width: 25px; } .k3 { width: 82px; } .k4 { width: 50px; } .k5 { width: 32px; } .k6 { width: 18px; }
.items th.c1 span { display: flex; align-items: center; justify-content: space-between; padding: 0 7px 0 20px; }
.items td.c1 svg { display: inline-block; vertical-align: middle; margin-left: 18px; }
.items td.c1 span { display: inline-block; width: 86px; padding: 2px 3px 3px; vertical-align: middle; }
.items td.c2, .items th.c2 { padding-left: 2px; color: #c8c8c8; }
.items td.c2 .chip { width: 10px; height: 10px; vertical-align: middle; }
.items td.c5 { padding-left: 1px; font-size: 12px; }
.items td.c6 { color: #bbb; padding-left: 1px; }
.up { width: 10px; height: 5px; background: #999; clip-path: polygon(50% 0, 100% 100%, 0 100%); }
.items .sel td { background: #535353; }
.items .sel .c1 span { background: #b9b9b9; color: #222; font-weight: 700; font-size: 12px; }
.items .sel td.c6 { background: #2f2f2f; }
.listbody { flex: 1; display: flex; justify-content: flex-end; }
.scroll { width: 18px; background: #2f2f2f; }
.pfoot { display: flex; align-items: center; height: 18px; border-top: 1px solid #333; padding: 0 17px 0 3px; gap: 10px; }
.pfoot button { color: #2da0cb; margin: 0 15px 0 -2px; }
.hbar { flex: 1; align-self: stretch; background: linear-gradient(90deg, #505050 32%, #2f2f2f 32%); margin-left: 4px; }

.vhead { display: flex; align-items: center; height: 32px; padding-left: 12px; }
.vhead > svg { margin: 0 10px; color: #bbb; }
.vhead > .s10 { margin: 0 14px; }
.x { color: #999; margin-right: 10px; }
.vhead .chip { width: 10px; margin-right: 1px; }
.crumb { align-self: flex-start; background: #1b1b1b; margin-left: 20px; width: 97px; text-align: center; height: 19px; line-height: 18px; }
.stage { flex: 1; display: flex; justify-content: center; align-items: center; padding-top: 4px; }
.canvas { width: 52%; aspect-ratio: 533 / 299; background: #030303; position: relative; }
.mark { position: absolute; left: 48%; width: 14px; height: 9px; border: 1px solid #6d2018; }
.mark.top { top: 39%; border-bottom: 0; }
.mark.bottom { top: 57%; border-top: 0; }
.vfoot { display: flex; align-items: center; height: 24px; border-top: 1px solid #333; padding-left: 3px; gap: 2px; }
.vfoot svg { margin: 0 2px; }
.vfoot .views ~ svg { margin: 0 3px; }
.pick { position: relative; display: block; height: 20px; background: #303030; min-width: 0; flex: none; }
.pick select { appearance: none; width: 100%; height: 100%; padding: 0 16px 0 7px; color: #ccc; overflow: hidden; text-overflow: clip; }
.pick::after { content: ""; position: absolute; right: 5px; top: 6px; width: 10px; height: 6px; background: #eee; clip-path: polygon(0 0, 100% 0, 50% 100%); pointer-events: none; }
.w72 { width: 72px; } .w90 { width: 91px; } .w108 { width: 109px; }
.box { background: #303030; height: 20px; width: 73px; color: #ccc; }
.exp { color: #2da0cb; margin-left: 2px; }

.side { background: #2a2a2a; padding-right: 18px; }
.stack { display: flex; flex-direction: column; gap: 3px; background: #1b1b1b; border-right: 1px solid #444; }
.fold { height: 29px; background: #2a2a2a; color: #7c7c7c; text-align: left; padding-left: 12px; }
.char { background: #444; height: 136px; padding: 0 6px 0 4px; }
.char h2 { display: flex; justify-content: space-between; margin: 0 5px 6px 8px; padding-bottom: 3px; font: inherit; height: 32px; align-items: center; color: #ccc; }
.fonts { display: flex; gap: 5px; }
.fcol { width: 128px; display: grid; gap: 5px; }
.swatches { width: 72px; height: 46px; }
.nums { display: grid; grid-template-columns: 26px 47px 42px 23px 52px 8px; align-items: center; row-gap: 3px; margin-top: 8px; white-space: nowrap; }
.nums b { color: #2da0cb; font-weight: 400; }

.timeline { background: #444; border-left: 2px solid #1b1b1b; border-right: 2px solid #1b1b1b; }
.queue { width: 170px; padding-left: 27px; }
.cur { width: 155px; padding-left: 12px; }
.cur .chip { margin-right: 11px; }
.third { padding-left: 28px; gap: 12px; }
.tl { display: grid; grid-template-columns: 776px 1fr 18px; height: 253px; }
.left { border-right: 1px solid #2c2c2c; }
.thead { height: 38px; display: flex; align-items: center; padding-bottom: 2px; gap: 11px; }
.clock { width: 115px; text-align: center; color: #2da0cb; line-height: 14px; padding-left: 4px; }
.clock b { display: block; font: bold 18px/19px "Open Sans", sans-serif; color: #35b0de; }
.thead .field { flex: 1; margin: 0 6px 0 0; }
.thead > svg:nth-child(3) { margin-right: 2px; }
.thead > svg:nth-child(4) { margin-right: 6px; }
.thead > svg:last-child { margin: 0 17px 0 5px; }
.cols { display: grid; grid-template-columns: 72px 33px 34px 137px 73px 26px 73px 142px 123px 1fr; align-items: center; background: #4d4d4d; white-space: nowrap; }
.hdr { height: 20px; border-top: 1px solid #303030; border-bottom: 2px solid #303030; background: #505050; font-size: 9px; color: #a8a8a8; }
.hdr > span:not(.av):not(.sw):not(.ctr) { padding-left: 5px; }
.av { display: flex; align-items: center; gap: 2px; padding-left: 4px; color: #bbb; }
.ctr { justify-self: center; }
.tagcol { padding-left: 8px; color: #c8c8c8; }
.layer { height: 18px; border-bottom: 1px solid #3a3a3a; }
.sq { width: 13px; height: 14px; background: #303030; display: block; }
.layer .av > i:nth-child(2) { width: 5px; }
.lab { display: flex; align-items: center; gap: 6px; padding-left: 3px; }
.lab .chip { width: 13px; height: 13px; }
.num { text-align: left; padding-left: 5px; }
.layer .num, .name { font-size: 12px; }
.name { display: flex; align-items: center; gap: 8px; padding-left: 4px; }
.layer .pick { height: 17px; }
.layer .pick select { padding: 0 15px 0 6px; }
.layer .pick::after { right: 4px; top: 5px; }
.sw { display: flex; gap: 2px; padding-left: 3px; color: #bbb; align-items: center; }
.sw svg { width: 14px; height: 14px; }
.sw em { width: 14px; font: italic bold 14px/14px "Liberation Serif", serif; }
.dk { background: #303030; }
.parent { display: flex; align-items: center; gap: 6px; padding-left: 4px; }
.parent .pick { width: 94px; }
.prop { display: flex; align-items: center; height: 17px; border-bottom: 1px solid #3a3a3a; gap: 10px; }
.p1 { padding-left: 93px; } .p2 { padding-left: 110px; gap: 8px; }
.anim { display: flex; gap: 3px; margin-left: 344px; }
.p3 { padding-left: 470px; border: 0; gap: 6px; }
.p3 svg:first-child { margin-right: 17px; }
.exprname { padding: 48px 0 0 146px; }

.graph { position: relative; background: #505050; margin-left: 4px; padding-right: 5px; min-width: 0; }
.navi { height: 15px; padding: 6px 0 0; background: #444; display: flex; justify-content: space-between; margin: 0 -5px 0 -3px; }
.navi::before { content: ""; order: 1; flex: 1; background: #7a7a7a; }
.navi i { width: 8px; border: 2px solid #2ea8dc; border-radius: 5px 0 0 5px; }
.navi i:last-child { order: 2; border-radius: 0 5px 5px 0; margin-right: 1px; }
.ruler { display: flex; justify-content: space-between; height: 22px; background: #444; border-bottom: 2px solid #222; margin-right: -5px; padding: 2px 7px 0 5px; }
.ruler span { width: 0; display: flex; justify-content: center; position: relative; }
.ruler span::after { content: ""; position: absolute; left: 0; bottom: 0; width: 1px; height: 4px; background: #aaa; }
.ruler span:first-child { justify-content: flex-start; padding-left: 4px; margin-right: -4px; }
.area { display: flex; justify-content: space-between; height: 18px; background: #757575; margin: 0 -3px; border-bottom: 1px solid #222; position: relative; }
.area i { width: 6px; border: 2px solid #2ea8dc; }
.cache { height: 4px; background: #2e7d32; margin-left: 5px; }
.bar { height: 16px; background: #944b42; margin-left: 5px; }
.track { height: 17px; border-bottom: 1px solid #404040; padding: 2px 0 0 1px; }
.track svg { position: relative; z-index: 1; }
.expr { padding: 1px 0; white-space: nowrap; color: #bebebe; }
.playhead { position: absolute; left: -1px; top: 20px; }
.needle { position: absolute; left: 4px; top: 32px; bottom: 0; width: 2px; background: #4e8ca5; }
.gutter { display: flex; flex-direction: column; align-items: center; padding-top: 37px; gap: 8px; border-left: 2px solid #2c2c2c; }
.gutter i { width: 100%; height: 79px; margin-top: auto; background: #2d2d2d; }
.tfoot { display: flex; align-items: center; height: 19px; border-top: 1px solid #2c2c2c; padding-left: 5px; gap: 6px; margin-bottom: 1px; }
.tfoot .zoom { display: flex; align-items: center; gap: 8px; width: 104px; margin-left: 721px; }
.zoom input { appearance: none; width: 60px; height: 14px; }
.zoom input::-webkit-slider-thumb { appearance: none; width: 11px; height: 12px; background: #929292; clip-path: polygon(0 25%, 50% 0, 100% 25%, 100% 100%, 0 100%); }
.hscroll { flex: 1; align-self: stretch; background: #2d2d2d; margin-right: 17px; }

.taskbar { display: flex; height: 42px; background: #131313; color: #eee; white-space: nowrap; align-items: stretch; font-size: 12px; }
.t { display: flex; align-items: center; justify-content: center; width: 45px; }
.start { width: 50px; }
.find { width: 52px; }
.run { width: 91px; justify-content: flex-start; padding-left: 3px; gap: 3px; border-bottom: 3px solid #a9cc64; padding-top: 3px; margin: 0 4px; }
.run.act { background: #373737; width: 99px; padding-left: 8px; gap: 5px; margin: 0 1px; }
.ad { width: 23px; height: 23px; border: 2px solid; display: grid; place-items: center; font-size: 13px; line-height: 18px; }
.pr { background: #2a0634; color: #b877c8; } .ae { background: #1f0a49; color: #9a7ed0; } .au { background: #06332f; color: #25a58e; } .me { background: #14104a; color: #8d80d2; }
.tray { display: flex; align-items: center; gap: 7px; margin-left: auto; }
.tray span { margin-left: 3px; }
.date { width: 86px; text-align: center; line-height: 18px; padding-top: 2px; }
.note { margin: 12px 19px 0 5px; }
.edge { width: 1px; background: #444; margin-right: 5px; }

.caption { position: absolute; white-space: nowrap; pointer-events: none; }
.head { font: 91px/92px "Liberation Serif", serif; color: #838383; left: 581px; top: -23px; -webkit-text-stroke: 1px #838383; }
.func { font: 94px/94px "Liberation Serif", serif; color: #e6e6e6; left: 553px; top: 456px; -webkit-text-stroke: 1px #e6e6e6; }
.brand { position: absolute; left: 1250px; top: 794px; font: bold 48px/54px "Liberation Serif", serif; color: #e9ecd3; text-shadow: 1px 1px 1px #222, -1px 0 1px #333, 0 -1px 1px #333; }
.pointer { position: absolute; left: 737px; top: 749px; }
```
